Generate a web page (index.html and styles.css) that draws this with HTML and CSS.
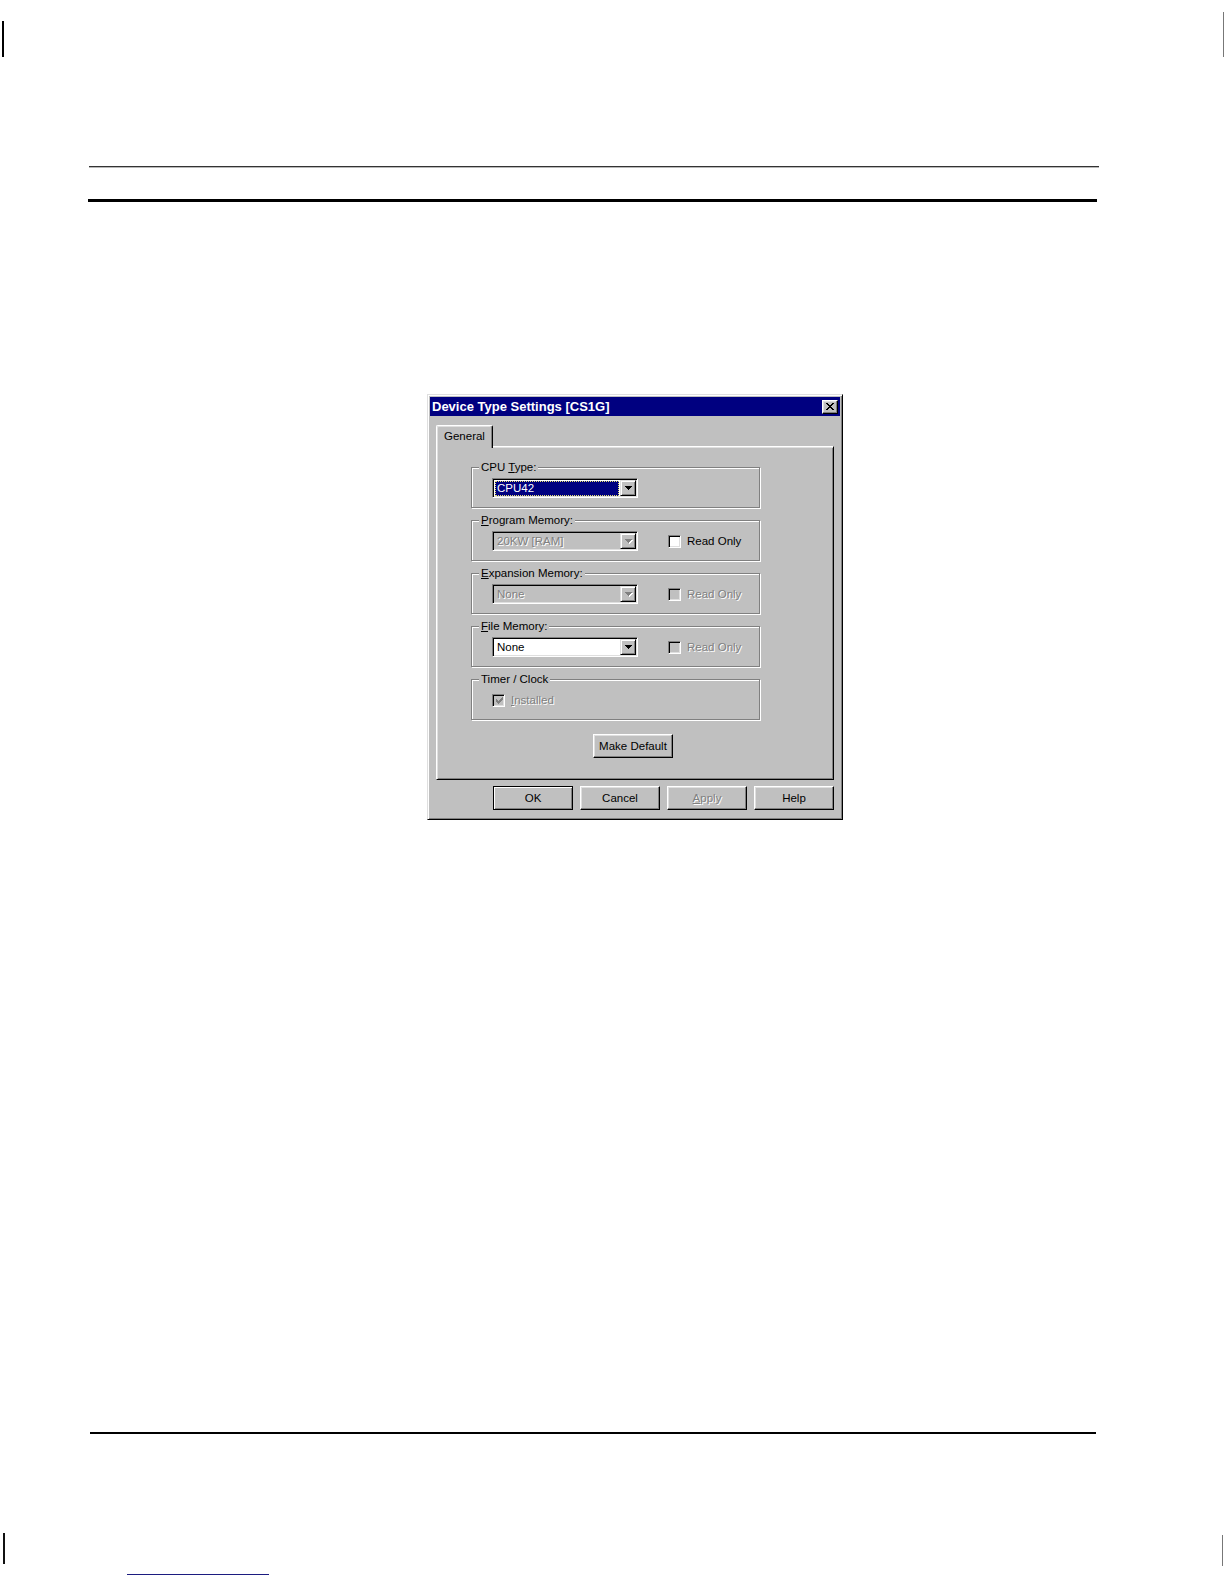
FILE: index.html
```html
<!DOCTYPE html>
<html>
<head>
<meta charset="utf-8">
<title>Device Type Settings [CS1G]</title>
<link rel="stylesheet" href="styles.css">
</head>
<body>
<div class="page">
  <div class="marks marks-top">
    <span class="mark mark-tl"></span>
    <span class="mark mark-tr"></span>
  </div>
  <div class="rule rule-thin"></div>
  <div class="rule rule-thick"></div>

  <div class="dialog">
    <div class="titlebar">
      <span class="title">Device Type Settings [CS1G]</span>
      <span class="close">
        <svg width="8" height="7" viewBox="0 0 8 7" shape-rendering="crispEdges"><path d="M0 0h2v1H0zM6 0h2v1H6zM1 1h2v1H1zM5 1h2v1H5zM2 2h4v1H2zM3 3h2v1H3zM2 4h4v1H2zM1 5h2v1H1zM5 5h2v1H5zM0 6h2v1H0zM6 6h2v1H6z"/></svg>
      </span>
    </div>

    <div class="tabs">
      <div class="tab">General</div>
    </div>

    <div class="panel">
      <div class="group">
        <span class="legend">CPU <u>T</u>ype:</span>
        <div class="combo">
          <span class="combo-text"><span class="sel">CPU42</span></span>
          <span class="combo-btn"><svg width="7" height="4" viewBox="0 0 7 4" shape-rendering="crispEdges"><path d="M0 0h7v1H0zM1 1h5v1H1zM2 2h3v1H2zM3 3h1v1H3z"/></svg></span>
        </div>
      </div>

      <div class="group">
        <span class="legend"><u>P</u>rogram Memory:</span>
        <div class="combo disabled">
          <span class="combo-text">20KW [RAM]</span>
          <span class="combo-btn"><svg width="7" height="4" viewBox="0 0 7 4" shape-rendering="crispEdges"><path d="M0 0h7v1H0zM1 1h5v1H1zM2 2h3v1H2zM3 3h1v1H3z"/></svg></span>
        </div>
        <span class="check">
          <span class="box"></span>
          <span class="check-label">Read Only</span>
        </span>
      </div>

      <div class="group">
        <span class="legend"><u>E</u>xpansion Memory:</span>
        <div class="combo disabled">
          <span class="combo-text">None</span>
          <span class="combo-btn"><svg width="7" height="4" viewBox="0 0 7 4" shape-rendering="crispEdges"><path d="M0 0h7v1H0zM1 1h5v1H1zM2 2h3v1H2zM3 3h1v1H3z"/></svg></span>
        </div>
        <span class="check disabled">
          <span class="box"></span>
          <span class="check-label">Read Only</span>
        </span>
      </div>

      <div class="group">
        <span class="legend"><u>F</u>ile Memory:</span>
        <div class="combo">
          <span class="combo-text">None</span>
          <span class="combo-btn"><svg width="7" height="4" viewBox="0 0 7 4" shape-rendering="crispEdges"><path d="M0 0h7v1H0zM1 1h5v1H1zM2 2h3v1H2zM3 3h1v1H3z"/></svg></span>
        </div>
        <span class="check disabled">
          <span class="box"></span>
          <span class="check-label">Read Only</span>
        </span>
      </div>

      <div class="group">
        <span class="legend">Timer / Clock</span>
        <span class="check disabled first">
          <span class="box"><svg width="7" height="7" viewBox="0 0 7 7" shape-rendering="crispEdges"><path d="M6 0h1v1H6zM5 1h2v1H5zM0 2h1v1H0zM4 2h3v1H4zM0 3h2v1H0zM3 3h3v1H3zM0 4h5v1H0zM1 5h3v1H1zM2 6h1v1H2z"/></svg></span>
          <span class="check-label"><u>I</u>nstalled</span>
        </span>
      </div>

      <div class="btn make-default">Make Default</div>
    </div>

    <div class="buttons">
      <div class="btn default">OK</div>
      <div class="btn">Cancel</div>
      <div class="btn disabled"><u>A</u>pply</div>
      <div class="btn">Help</div>
    </div>
  </div>

  <div class="rule rule-bottom"></div>
  <div class="marks marks-bottom">
    <span class="mark mark-bl"></span>
    <span class="mark mark-br"></span>
  </div>
  <div class="link-line"></div>
</div>
</body>
</html>
```

FILE: styles.css
```css
html, body {
  margin: 0;
  padding: 0;
  background: #fff;
}

body {
  font-family: "Liberation Sans", Arial, sans-serif;
  font-size: 11.5px;
  color: #000;
}

.page {
  width: 1224px;
  height: 1584px;
  display: flex;
  flex-direction: column;
  overflow: hidden;
}

/* crop marks */
.marks {
  display: flex;
  justify-content: space-between;
}
.marks-top {
  height: 57px;
  align-items: flex-end;
}
.mark-tl {
  width: 2px;
  height: 36px;
  margin-left: 2px;
  background: #000;
}
.mark-tr {
  width: 1px;
  height: 45px;
  background: #777;
}
.marks-bottom {
  height: 33px;
  margin-top: 99px;
}
.mark-bl {
  width: 2px;
  height: 31px;
  margin-left: 3px;
  background: #111;
  align-self: flex-start;
}
.mark-br {
  width: 1px;
  height: 31px;
  margin-right: 1px;
  background: #777;
  align-self: flex-end;
}

/* rules */
.rule-thin {
  margin: 109px 0 0 89px;
  width: 1010px;
  height: 1px;
  background: #333;
  border-bottom: 1px solid #b8b8b8;
}
.rule-thick {
  margin: 31px 0 0 88px;
  width: 1009px;
  height: 3px;
  background: #000;
}
.rule-bottom {
  margin: 612px 0 0 90px;
  width: 1006px;
  height: 2px;
  background: #000;
}
.link-line {
  margin: 8px 0 0 127px;
  width: 142px;
  height: 1px;
  background: #1c1c80;
}

/* dialog */
.dialog {
  box-sizing: border-box;
  margin: 192px 0 0 427px;
  width: 416px;
  height: 426px;
  background: #c0c0c0;
  border: 1px solid;
  border-color: #dfdfdf #000 #000 #dfdfdf;
  box-shadow: inset 1px 1px 0 #fff, inset -1px -1px 0 #808080;
  padding: 2px;
  display: flex;
  flex-direction: column;
}

.titlebar {
  height: 19px;
  background: #000080;
  display: flex;
  align-items: center;
  justify-content: space-between;
  padding: 0 2px;
}
.title {
  color: #fff;
  font-weight: bold;
  font-size: 13px;
  line-height: 19px;
  white-space: nowrap;
}
.close {
  box-sizing: border-box;
  width: 16px;
  height: 14px;
  background: #c0c0c0;
  border: 1px solid;
  border-color: #fff #000 #000 #fff;
  box-shadow: inset -1px -1px 0 #808080, inset 1px 1px 0 #dfdfdf;
  display: flex;
  align-items: center;
  justify-content: center;
  padding-right: 1px;
}
.close svg {
  display: block;
  fill: #000;
}

/* tabs */
.tabs {
  display: flex;
  margin: 9px 6px 0 6px;
  position: relative;
  z-index: 1;
}
.tab {
  box-sizing: border-box;
  width: 57px;
  height: 23px;
  margin-bottom: -2px;
  background: #c0c0c0;
  border-top: 1px solid #fff;
  border-left: 1px solid #fff;
  border-right: 1px solid #000;
  border-radius: 2px 2px 0 0;
  box-shadow: inset -1px 0 0 #808080, inset 1px 1px 0 #dfdfdf;
  padding: 3px 0 0 7px;
  line-height: 14px;
  white-space: nowrap;
}

/* tab panel */
.panel {
  box-sizing: border-box;
  height: 334px;
  margin: 0 6px;
  border: 1px solid;
  border-color: #fff #000 #000 #fff;
  box-shadow: inset 1px 1px 0 #dfdfdf, inset -1px -1px 0 #808080;
  padding: 20px 0 0 34px;
  display: flex;
  flex-direction: column;
  gap: 12px;
}

.group {
  position: relative;
  box-sizing: border-box;
  width: 289px;
  height: 41px;
  border: 1px solid #808080;
  box-shadow: inset 1px 1px 0 #fff, 1px 1px 0 #fff;
  padding: 10px 0 0 20px;
  display: flex;
  align-items: center;
  align-content: flex-start;
  flex-wrap: wrap;
}
.group > .combo,
.group > .check {
  height: 20px;
}
.legend {
  position: absolute;
  top: -8px;
  left: 7px;
  padding: 0 2px;
  line-height: 14px;
  background: #c0c0c0;
  white-space: nowrap;
}

/* combo box */
.combo {
  box-sizing: border-box;
  width: 146px;
  height: 20px;
  border: 1px solid;
  border-color: #808080 #fff #fff #808080;
  box-shadow: inset 1px 1px 0 #000, inset -1px -1px 0 #dfdfdf;
  background: #fff;
  padding: 2px 1px 1px 2px;
  display: flex;
}
.combo-text {
  flex: 1;
  display: flex;
  line-height: 15px;
  padding-left: 2px;
  margin-right: 1px;
  white-space: nowrap;
  overflow: hidden;
}
.combo-text .sel {
  flex: 1;
  margin-left: -2px;
  padding-left: 2px;
  background: #000080;
  color: #fff;
  outline: 1px dotted #e8e070;
  outline-offset: -1px;
}
.combo-btn {
  box-sizing: border-box;
  width: 16px;
  height: 16px;
  margin-top: -1px;
  background: #c0c0c0;
  border: 1px solid;
  border-color: #dfdfdf #000 #000 #dfdfdf;
  box-shadow: inset 1px 1px 0 #fff, inset -1px -1px 0 #808080;
  display: flex;
  align-items: center;
  justify-content: center;
}
.combo-btn svg {
  display: block;
  fill: #000;
}
.combo.disabled {
  background: #c0c0c0;
}
.combo.disabled .combo-text {
  color: #808080;
  text-shadow: 1px 1px 0 #fff;
}
.combo.disabled .combo-btn svg {
  fill: #808080;
  filter: drop-shadow(1px 1px 0 #fff);
}

/* checkbox */
.check {
  display: flex;
  align-items: center;
  gap: 6px;
  margin-left: 30px;
  white-space: nowrap;
}
.check.first {
  margin-left: 0;
  gap: 6px;
}
.box {
  box-sizing: border-box;
  width: 13px;
  height: 13px;
  border: 1px solid;
  border-color: #808080 #fff #fff #808080;
  box-shadow: inset 1px 1px 0 #000, inset -1px -1px 0 #dfdfdf;
  background: #fff;
  display: flex;
  align-items: center;
  justify-content: center;
}
.box svg {
  display: block;
  fill: #808080;
  margin: 1px 0 0 1px;
}
.check.disabled .box {
  background: #c0c0c0;
}
.check.disabled .check-label {
  color: #808080;
  text-shadow: 1px 1px 0 #fff;
}

/* buttons */
.btn {
  box-sizing: border-box;
  width: 80px;
  height: 24px;
  background: #c0c0c0;
  border: 1px solid;
  border-color: #fff #000 #000 #fff;
  box-shadow: inset -1px -1px 0 #808080, inset 1px 1px 0 #dfdfdf;
  display: flex;
  align-items: center;
  justify-content: center;
  white-space: nowrap;
  line-height: 14px;
}
.btn.default {
  border-color: #000;
  box-shadow: inset 1px 1px 0 #fff, inset -1px -1px 0 #808080;
}
.btn.disabled {
  color: #808080;
  text-shadow: 1px 1px 0 #fff;
}
.make-default {
  margin-top: 2px;
  margin-left: 122px;
}

.buttons {
  display: flex;
  justify-content: flex-end;
  gap: 7px;
  margin: 6px 6px 0 6px;
}
```
